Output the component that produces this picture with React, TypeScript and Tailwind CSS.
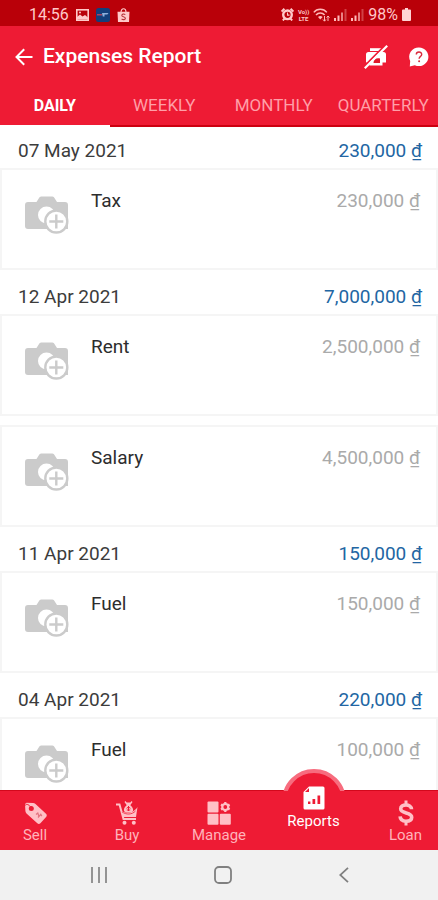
import { useState } from 'react';
import type { ReactNode } from 'react';
import clsx from 'clsx';

type Expense = { name: string; amount: string };
type DayGroup = { date: string; total: string; items: Expense[] };

const TABS = ['DAILY', 'WEEKLY', 'MONTHLY', 'QUARTERLY'];

const GROUPS: DayGroup[] = [
  {
    date: '07 May 2021',
    total: '230,000 ₫',
    items: [{ name: 'Tax', amount: '230,000 ₫' }],
  },
  {
    date: '12 Apr 2021',
    total: '7,000,000 ₫',
    items: [
      { name: 'Rent', amount: '2,500,000 ₫' },
      { name: 'Salary', amount: '4,500,000 ₫' },
    ],
  },
  {
    date: '11 Apr 2021',
    total: '150,000 ₫',
    items: [{ name: 'Fuel', amount: '150,000 ₫' }],
  },
  {
    date: '04 Apr 2021',
    total: '220,000 ₫',
    items: [{ name: 'Fuel', amount: '100,000 ₫' }],
  },
];

/* Status bar icons */

function PictureIcon() {
  return (
    <svg width="13" height="12" viewBox="0 0 13 12" fill="none" stroke="#ffc9c9">
      <rect x="0.8" y="0.8" width="11.4" height="10.4" strokeWidth="1.6" />
      <path d="M1 10.5V8l3-2.5 2.500 2L9 6l3 2.500v2z" fill="#ffc9c9" stroke="none" />
      <circle cx="4" cy="3.6" r="1" fill="#ffc9c9" stroke="none" />
    </svg>
  );
}

function BankAppIcon() {
  return (
    <svg width="14" height="14" viewBox="0 0 14 14">
      <rect width="14" height="14" rx="2.5" fill="#133f7c" />
      <path d="M1 6.2h5v1.2H1z" fill="#d0455c" />
      <path d="M6 5h6.5l-1.2 1.6H8.5v2H6.8z" fill="#8fb0dc" />
    </svg>
  );
}

function ShopIcon() {
  return (
    <svg width="13" height="14" viewBox="0 0 13 14">
      <path d="M0.5 3.8h12L12 14H1z" fill="#ffc9c9" />
      <path d="M4 4.5c0-5 5-5 5 0" fill="none" stroke="#ffc9c9" strokeWidth="1.2" />
      <path
        d="M8.3 6.6C6.8 5.6 4.8 6 4.8 7.4c0 1.6 3.6 1 3.6 2.9 0 1.5-2.3 1.8-3.8.7"
        fill="none"
        stroke="#b7353b"
        strokeWidth="1.1"
      />
    </svg>
  );
}

function AlarmIcon() {
  return (
    <svg width="13" height="13" viewBox="0 0 13 13" fill="none" stroke="#ffc9c9">
      <circle cx="6.5" cy="6.8" r="4.3" strokeWidth="2.4" />
      <path d="M6.5 4.5v2.6h2" strokeWidth="1.1" />
      <path d="M0.6 3.6 3.4 0.8M12.4 3.6 9.6 0.8M1.8 12.4l2-2M11.2 12.4l-2-2" strokeWidth="2" />
    </svg>
  );
}

function WifiIcon() {
  return (
    <svg width="17" height="14" viewBox="0 0 17 14" fill="none" stroke="#ffb9b9">
      <path d="M0.8 4.4C4 0.2 10.5 0.2 13.8 4.4" strokeWidth="1.5" />
      <path d="M3 7c2.3-2.8 6.3-2.8 8.6 0" strokeWidth="1.5" />
      <path d="M5 9c1.3-1.4 3.3-1.4 4.6 0l-2.3 2.6z" fill="#ffb9b9" stroke="none" />
      <path d="M11.5 8v5M10 11.5l1.5 1.7 1.4-1.7M15 13V8M13.6 9.6 15 8l1.5 1.6" strokeWidth="1" />
    </svg>
  );
}

function SignalIcon() {
  return (
    <svg width="13" height="12" viewBox="0 0 13 12" fill="#ffb9b9">
      <rect x="0" y="9" width="2" height="3" />
      <rect x="3.5" y="6.5" width="2" height="5.5" />
      <rect x="7" y="3.5" width="2" height="8.5" opacity="0.7" />
      <rect x="10.5" y="0" width="2" height="12" opacity="0.35" />
    </svg>
  );
}

function BatteryIcon() {
  return (
    <svg width="9" height="13" viewBox="0 0 9 13" fill="#ffd3d3">
      <path d="M3 0h3v1.6h2a1 1 0 0 1 1 1V12a1 1 0 0 1-1 1H1a1 1 0 0 1-1-1V2.6a1 1 0 0 1 1-1h2z" />
    </svg>
  );
}

/* App bar icons */

function BackIcon() {
  return (
    <svg width="18" height="18" viewBox="0 0 18 18" fill="none" stroke="#fff" strokeWidth="2">
      <path d="M17.5 9H1.8M9.2 1.2 1.5 9l7.7 7.8" />
    </svg>
  );
}

function PrinterOffIcon() {
  return (
    <svg width="24" height="24" viewBox="0 0 24 24">
      <path d="M6 3.2h11.500V6H6z" fill="#fff" />
      <path d="M4.5 7h15a2.500 2.500 0 0 1 2.500 2.500V17.500H18.500v3H5.500v-3H2V9.500A2.500 2.500 0 0 1 4.500 7z" fill="#fff" />
      <path d="M9.500 18c0-3.500 2-5.200 6.500-4.500V18z" fill="#e01a2c" />
      <path d="M0 21.500 20.800 0.700" stroke="#ee1b34" strokeWidth="1.800" />
      <path d="M0.800 23.2 23.200 0.800" stroke="#fff" strokeWidth="2.200" />
    </svg>
  );
}

function HelpIcon() {
  return (
    <svg width="20" height="20" viewBox="0 0 20 20">
      <path d="M10 0.5a9.500 9.300 0 1 1-4.200 17.700L0.800 19.500l0.400-5.500A9.500 9.300 0 0 1 10 0.500z" fill="#fff" />
      <path
        d="M7.300 7.600c0-3.400 5.400-3.300 5.400-0.200 0 2-2.600 2-2.600 4.300"
        fill="none"
        stroke="#d92a3d"
        strokeWidth="1.400"
      />
      <circle cx="10.100" cy="14.200" r="1" fill="#d92a3d" />
    </svg>
  );
}

function AddPhotoIcon() {
  return (
    <svg width="44" height="39" viewBox="0 0 44 39">
      <path
        d="M3 6h8.500l2.700-4.300C15 0.500 15.700 0.500 17 0.500h9.500c1.300 0 2 0 2.800 1.200L32 6h8a3 3 0 0 1 3 3v24H3a3 3 0 0 1-3-3V9a3 3 0 0 1 3-3z"
        fill="#cbcbcb"
      />
      <circle cx="21.500" cy="19" r="8.500" fill="#fff" />
      <circle cx="31.300" cy="25.500" r="11" fill="#fff" stroke="#cbcbcb" strokeWidth="2.400" />
      <path d="M31.300 18.500v14M24.300 25.500h14" stroke="#cbcbcb" strokeWidth="2.400" />
    </svg>
  );
}

/* Bottom navigation icons */

function TagIcon() {
  return (
    <svg width="24" height="24" viewBox="0 0 24 24">
      <path
        d="M3.500 1.800 10 2c1 0 1.800 0.400 2.500 1l10.500 9.800c1 1 1 2.200 0.100 3.200l-5.700 6.200c-0.900 1-2.100 1-3.100 0.100L3.500 12.500c-0.700-0.700-1-1.400-1.100-2.400L2 3z"
        fill="#ffc0c6"
      />
      <circle cx="8.300" cy="7.600" r="2.500" fill="#ee1b34" />
      <path d="M1.500 5.500C2.500 2 6 3 8.500 7.300" fill="none" stroke="#ee1b34" strokeWidth="1" />
      <path d="m13 13.500 1.800-1.500 1.200 3.500M15 16.500l2.800-3.200 1 1.800" fill="none" stroke="#e2727f" strokeWidth="1.200" />
    </svg>
  );
}

function CartIcon() {
  return (
    <svg width="24" height="26" viewBox="0 0 24 26">
      <path d="M1 4.500h3.500l4 14.500h12.500" fill="none" stroke="#ffc0c6" strokeWidth="2" />
      <path d="M5.500 9.500C8.500 14 18 14.500 22.500 7l-1.500 10H8z" fill="#ffc0c6" />
      <path
        d="M11.200 2.500h4.600l-1 2.300c2.500 1.700 3.700 4 3.200 6.200-1.500 2-7.500 2-9 0-0.500-2.200 0.700-4.500 3.200-6.200z"
        fill="#ffc0c6"
      />
      <path d="M10 1.500 12.500 5M17 1.500 14.500 5" stroke="#ffc0c6" strokeWidth="1.300" />
      <path d="M13.500 6v5M11.800 8.500c0-1.600 3.400-1.600 3.400 0M11.800 10h3.400" fill="none" stroke="#ee1b34" strokeWidth="1" />
      <path d="M7 11.800C11 15 17 14.800 20.500 11" fill="none" stroke="#ee1b34" strokeWidth="0.800" />
      <circle cx="9.500" cy="22.800" r="2" fill="#ffc0c6" />
      <circle cx="18.800" cy="22.800" r="2" fill="#ffc0c6" />
    </svg>
  );
}

function ManageIcon() {
  return (
    <svg width="24" height="24" viewBox="0 0 24 24" fill="#ffc0c6">
      <rect x="0.500" y="0.500" width="11" height="11" rx="1" />
      <rect x="0.500" y="12.800" width="11" height="11" rx="1" />
      <rect x="12.800" y="12.800" width="11" height="11" rx="1" />
      <circle cx="18.300" cy="6" r="3" fill="none" stroke="#ffc0c6" strokeWidth="2.200" />
      <path
        d="M18.300 1v2M18.300 9v2M14 3.500l1.500 1M21.100 7.500l1.500 1M14 8.500l1.500-1M21.100 4.500l1.500-1"
        stroke="#ffc0c6"
        strokeWidth="2.200"
      />
    </svg>
  );
}

function ReportIcon() {
  return (
    <svg width="22" height="24" viewBox="0 0 22 24">
      <path d="M6 0.500h14a1.500 1.500 0 0 1 1.500 1.500v20a1.500 1.500 0 0 1-1.500 1.500H2A1.500 1.500 0 0 1 0.500 22V6z" fill="#fff" />
      <path d="M6 2v4H2z" fill="#ee1b34" />
      <path d="M5 15.500h2.400V18H5zM9.500 13h2.700v5H9.500zM14.500 9.500h2.700V18h-2.700z" fill="#ee1b34" />
    </svg>
  );
}

function DollarIcon() {
  return (
    <svg width="16" height="26" viewBox="0 0 16 26" fill="none" stroke="#ffc0c6">
      <path
        d="M13.500 9.300C13.500 6.500 11 5 8 5c-3.300 0-5.300 1.500-5.300 3.800 0 5.400 11 2.900 11 8.400 0 2.500-2.300 4-5.700 4s-5.700-1.600-5.900-4.800"
        strokeWidth="3.600"
      />
      <path d="M8 0.500v5M8 20.500v5" strokeWidth="3" />
    </svg>
  );
}

function StatusBar() {
  return (
    <div className="flex h-[26px] shrink-0 items-center justify-between bg-[#b90009] pr-[27px] pl-[29px] pt-[3px] text-base text-[#ffc9c9]">
      <div className="flex items-center gap-[7px]">
        <span>14:56</span>
        <PictureIcon />
        <BankAppIcon />
        <ShopIcon />
      </div>
      <div className="flex items-center gap-[4px]">
        <AlarmIcon />
        <div className="flex flex-col text-center text-[6px] leading-[7px] font-bold">
          <span>Vo))</span>
          <span>LTE</span>
        </div>
        <WifiIcon />
        <SignalIcon />
        <SignalIcon />
        <span>98%</span>
        <BatteryIcon />
      </div>
    </div>
  );
}

function ExpenseCard({ item }: { item: Expense }) {
  return (
    <li className="mb-[9px] flex h-[102px] items-start border-2 border-[#f5f5f5] pr-4 pl-[23px]">
      <button className="mt-[26px]" aria-label={`Add photo for ${item.name}`}>
        <AddPhotoIcon />
      </button>
      <span className="mt-[19px] ml-[22px] grow leading-6 text-[#2d2d2d]">{item.name}</span>
      <span className="mt-[19px] leading-6 text-[#aaaaaa]">{item.amount}</span>
    </li>
  );
}

function NavItem({ label, icon }: { label: string; icon: ReactNode }) {
  return (
    <button className="flex flex-col items-center text-[15px] leading-[18px] text-[#ffb3ba]">
      <span className="flex h-[26px] items-center">{icon}</span>
      {label}
    </button>
  );
}

export default function App() {
  const [tab, setTab] = useState('DAILY');

  return (
    <div className="flex h-screen flex-col overflow-hidden bg-white font-[Roboto,'Noto_Sans',sans-serif]">
      <StatusBar />

      {/* App bar */}
      <header className="shrink-0 border-b-2 border-[#cc0010] bg-[#ee1b34] text-white">
        <div className="flex h-[61px] items-center pr-[9px] pl-[15px]">
          <button aria-label="Back">
            <BackIcon />
          </button>
          <h1 className="ml-[10px] grow text-[21px] font-medium">Expenses Report</h1>
          <button aria-label="Printer disconnected">
            <PrinterOffIcon />
          </button>
          <button className="ml-[21px]" aria-label="Help">
            <HelpIcon />
          </button>
        </div>
        <nav className="-mb-0.5 grid grid-cols-4">
          {TABS.map((t) => (
            <button
              key={t}
              onClick={() => setTab(t)}
              className={clsx(
                'h-10 border-b-2 pb-px',
                t === tab ? 'border-white text-base font-bold' : 'border-transparent text-[17px] text-[#ff9fa8]',
              )}
            >
              {t}
            </button>
          ))}
        </nav>
      </header>

      {/* Expenses grouped by day */}
      <main className="min-h-0 grow overflow-hidden pt-[6px] text-[19px]">
        {GROUPS.map((group) => (
          <section key={group.date}>
            <h2 className="flex h-[35px] items-center justify-between pt-[2px] pr-4 pl-[18px]">
              <span className="text-[#3c3c3c]">{group.date}</span>
              <span className="text-[#2266a3]">{group.total}</span>
            </h2>
            <ul>
              {group.items.map((item) => (
                <ExpenseCard key={item.name} item={item} />
              ))}
            </ul>
          </section>
        ))}
      </main>

      {/* Bottom navigation */}
      <nav className="grid h-[60px] shrink-0 grid-cols-[70fr_114fr_70fr_119fr_65fr] border-t border-[#d3081c] bg-[#ee1b34] pt-[9px]">
        <NavItem label="Sell" icon={<TagIcon />} />
        <NavItem label="Buy" icon={<CartIcon />} />
        <NavItem label="Manage" icon={<ManageIcon />} />
        <button className="relative flex flex-col items-center text-[15px] leading-[18px] text-white">
          <span className="absolute -top-[31px] left-1/2 h-[22px] w-16 -translate-x-1/2 overflow-hidden">
            <span className="absolute top-0 left-0 size-16 rounded-full border-4 border-[#f76c7e] bg-[#ee1b34]" />
          </span>
          <span className="relative -mt-4 flex h-7 items-center">
            <ReportIcon />
          </span>
          <span className="relative">Reports</span>
        </button>
        <NavItem label="Loan" icon={<DollarIcon />} />
      </nav>

      {/* System navigation */}
      <div className="flex h-[50px] shrink-0 items-center justify-between bg-[#f1f1f1] pr-[89px] pl-[91px]">
        <button aria-label="Recent apps">
          <svg width="16" height="16" viewBox="0 0 16 16" stroke="#8a8a8a" strokeWidth="1.8">
            <path d="M1 0v16M8 0v16M15 0v16" />
          </svg>
        </button>
        <button aria-label="Home">
          <svg width="18" height="18" viewBox="0 0 18 18" fill="none" stroke="#808080" strokeWidth="1.8">
            <rect x="1" y="1" width="16" height="16" rx="4" />
          </svg>
        </button>
        <button aria-label="Back one screen">
          <svg width="10" height="16" viewBox="0 0 10 16" fill="none" stroke="#808080" strokeWidth="1.8">
            <path d="M9 0.8 1.2 8 9 15.2" />
          </svg>
        </button>
      </div>
    </div>
  );
}
